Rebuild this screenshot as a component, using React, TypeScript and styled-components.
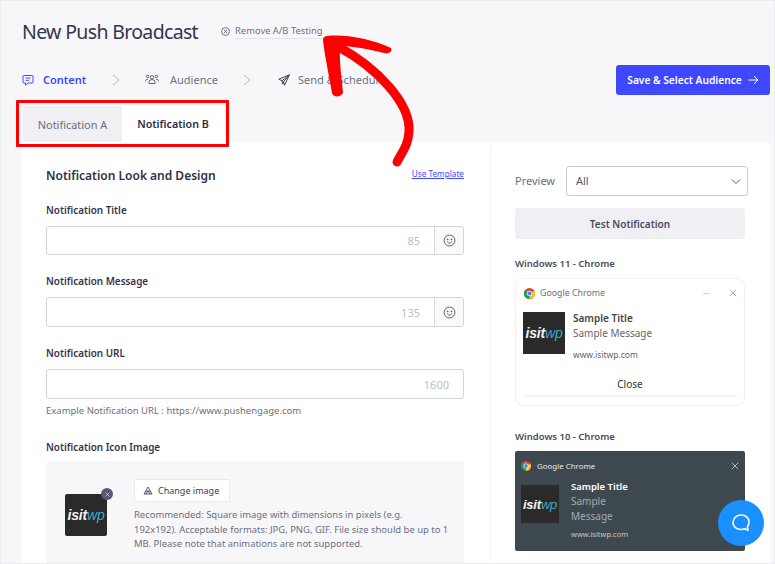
import React from "react";
import styled, { createGlobalStyle } from "styled-components";

const Global = createGlobalStyle`
  html, body { margin: 0; padding: 0; background: #f7f7fa; }
  * { box-sizing: border-box; }
  body { font-family: "Noto Sans", "Open Sans", sans-serif; color: #34344a; }
`;

const Page = styled.div`
  position: relative;
  width: 775px;
  height: 564px;
  overflow: hidden;
  background: #f7f7fa;
  border: 1px solid #ededf1;
  padding: 0 4px 0 21px;
`;
const Header = styled.header`
  display: flex;
  align-items: center;
  height: 60px;
`;
const Title = styled.h1`
  margin: 0;
  font-size: 19.5px;
  font-weight: 400;
  color: #33354f;
  letter-spacing: -0.66px;
`;
const RemoveLink = styled.a`
  display: flex;
  align-items: center;
  gap: 5px;
  margin-left: 23px;
  margin-top: 1px;
  font-size: 9.4px;
  color: #6f7081;
  span { border-bottom: 1px solid #e3e3ea; line-height: 14px; }
`;
const StepBar = styled.div`
  display: flex;
  align-items: center;
  justify-content: space-between;
  height: 37px;
`;
const Steps = styled.nav`
  display: flex;
  align-items: center;
`;
const Step = styled.div<{ $active?: boolean; $w: number }>`
  display: flex;
  align-items: center;
  width: ${(p) => p.$w}px;
  font-size: 11px;
  font-weight: ${(p) => (p.$active ? 600 : 400)};
  color: ${(p) => (p.$active ? "#3f48ff" : "#6f7081")};
`;
const StepIcon = styled.span<{ $w: number }>`
  display: flex;
  width: ${(p) => p.$w}px;
`;
const SaveButton = styled.button`
  display: flex;
  align-items: center;
  justify-content: center;
  gap: 6px;
  width: 154px;
  height: 30px;
  border: 0;
  border-radius: 3px;
  background: #3f48ff;
  color: #fff;
  font: 600 10.2px "Noto Sans", sans-serif;
`;
const Tabs = styled.div`
  display: flex;
  margin: 8px 0 0 1px;
  height: 36px;
`;
const Tab = styled.div<{ $active?: boolean; $w: number }>`
  display: flex;
  align-items: center;
  justify-content: center;
  width: ${(p) => p.$w}px;
  font-size: ${(p) => (p.$active ? 10.7 : 10.9)}px;
  font-weight: ${(p) => (p.$active ? 600 : 400)};
  color: ${(p) => (p.$active ? "#2d2d42" : "#6a6b7c")};
  background: ${(p) => (p.$active ? "#fff" : "#f0f0f4")};
`;
const Panels = styled.div`
  display: flex;
  gap: 1px;
  height: 422px;
  background: #f7f7fa;
`;
const MainPanel = styled.section`
  width: 468px;
  background: #fff;
  padding: 24px 26px 0 24px;
`;
const SidePanel = styled.aside`
  width: 279px;
  background: #fff;
  border-radius: 4px 4px 0 0;
  padding: 24px 22px 0 24px;
`;
const PanelHead = styled.div`
  display: flex;
  justify-content: space-between;
  align-items: center;
  height: 18px;
`;
const PanelTitle = styled.h2`
  margin: 0;
  font-size: 12px;
  font-weight: 600;
  color: #2f3048;
`;
const TemplateLink = styled.a`
  font-size: 8.2px;
  color: #3f48ff;
  text-decoration: underline;
  margin-top: -4px;
`;
const Label = styled.div<{ $top: number }>`
  margin-top: ${(p) => p.$top}px;
  height: 14px;
  line-height: 14px;
  font-size: 9.9px;
  font-weight: 600;
  color: #33344c;
`;
const Field = styled.div<{ $h: number }>`
  display: flex;
  height: ${(p) => p.$h}px;
  margin-top: 9px;
  border: 1px solid #d4d4dc;
  border-radius: 3px;
`;
const FieldBody = styled.div`
  flex: 1;
  display: flex;
  align-items: center;
  justify-content: flex-end;
  padding-right: 14px;
  font-size: 11px;
  color: #bcbcc6;
`;
const EmojiBox = styled.div`
  width: 29px;
  display: flex;
  align-items: center;
  justify-content: center;
  border-left: 1px solid #d4d4dc;
  background: #fafafb;
  border-radius: 0 3px 3px 0;
  color: #55566a;
`;
const Hint = styled.div`
  margin-top: 5px;
  font-size: 9.5px;
  line-height: 14px;
  color: #6d6e7e;
`;
const IconArea = styled.div`
  display: flex;
  margin-top: 7px;
  height: 110px;
  padding: 18px 15px 0 19px;
  background: #f7f7fa;
  border-radius: 4px;
  gap: 27px;
`;
const LogoWrap = styled.div`
  position: relative;
  width: 42px;
  height: 42px;
  margin-top: 15px;
  flex: none;
`;
const Logo = styled.div<{ $size: number; $w: number; $radius?: number }>`
  width: ${(p) => p.$w}px;
  height: ${(p) => p.$w}px;
  flex: none;
  display: flex;
  align-items: center;
  justify-content: center;
  background: #2a2a2a;
  border-radius: ${(p) => p.$radius ?? 0}px;
  font: italic 700 ${(p) => p.$size}px "Liberation Sans", sans-serif;
  color: #f2f2f2;
  letter-spacing: -0.2px;
  b { font-weight: 400; color: #3fa7c6; }
`;
const Badge = styled.span`
  position: absolute;
  top: -6px;
  right: -6px;
  width: 12px;
  height: 12px;
  border-radius: 50%;
  background: #565870;
  display: flex;
  align-items: center;
  justify-content: center;
`;
const ChangeCol = styled.div`
  flex: 1;
`;
const ChangeButton = styled.div`
  display: flex;
  align-items: center;
  gap: 5px;
  width: 96px;
  height: 23px;
  padding-left: 8px;
  background: #fff;
  border: 1px solid #e9e9ee;
  border-radius: 2px;
  font-size: 9px;
  color: #3b3c52;
`;
const Recommend = styled.p`
  margin: 6px 0 0;
  font-size: 9.45px;
  line-height: 14.7px;
  color: #6d6e7e;
  white-space: nowrap;
`;
const PreviewRow = styled.div`
  display: flex;
  align-items: center;
  height: 30px;
`;
const PreviewLabel = styled.span`
  width: 51px;
  font-size: 11px;
  line-height: 14px;
  color: #6d6e7e;
`;
const Select = styled.div`
  width: 182px;
  height: 30px;
  border: 1px solid #c9c9d2;
  border-radius: 3px;
  display: flex;
  align-items: center;
  justify-content: space-between;
  padding: 0 5px 1px 9px;
  font-size: 11px;
  color: #55566a;
`;
const TestButton = styled.div`
  display: flex;
  align-items: center;
  justify-content: center;
  width: 230px;
  height: 31px;
  margin-top: 12px;
  background: #f0f0f4;
  border-radius: 3px;
  font-size: 10px;
  font-weight: 600;
  color: #4a4b60;
`;
const SectionLabel = styled.div<{ $top: number }>`
  margin-top: ${(p) => p.$top}px;
  height: 14px;
  line-height: 14px;
  font-size: 9.5px;
  font-weight: 600;
  color: #4a4b60;
`;
const Win11Card = styled.div`
  width: 230px;
  height: 128px;
  margin-top: 7px;
  border: 1px solid #f0f0f3;
  border-radius: 8px;
  padding: 6px 7px 0 7px;
`;
const CardTop = styled.div`
  display: flex;
  align-items: center;
  height: 16px;
  padding-left: 1px;
  font-size: 8.8px;
  color: #6e6e6e;
  gap: 5px;
`;
const Spacer = styled.span`
  flex: 1;
`;
const Dots = styled.span`
  font-size: 8px;
  color: #999;
  margin-right: 14px;
  letter-spacing: 0.2px;
`;
const CardBody = styled.div`
  display: flex;
  gap: 8px;
  height: 42px;
  margin-top: 11px;
`;
const CardText = styled.div`
  display: flex;
  flex-direction: column;
`;
const Win11Title = styled.div`
  font-size: 10px;
  font-weight: 600;
  line-height: 13px;
  color: #444;
`;
const Win11Msg = styled.div`
  font-size: 10px;
  line-height: 15px;
  margin-top: 1px;
  color: #666;
`;
const Win11Url = styled.div`
  font-size: 8.5px;
  line-height: 12px;
  margin-top: 8px;
  color: #666;
`;
const CloseBtn = styled.div`
  display: flex;
  align-items: center;
  justify-content: center;
  height: 24px;
  margin-top: 19px;
  border-bottom: 2px solid #f3f3f3;
  border-radius: 3px;
  box-shadow: 0 0 1px #f3f3f3;
  font-size: 10px;
  color: #333;
`;
const Win10Card = styled.div`
  width: 230px;
  height: 100px;
  margin-top: 7px;
  background: #3e484f;
  border-radius: 2px;
  padding: 7px 6px 0 6px;
`;
const Win10Top = styled.div`
  display: flex;
  align-items: center;
  gap: 6px;
  height: 16px;
  font-size: 7.9px;
  color: #e8eaeb;
`;
const Win10Body = styled.div`
  display: flex;
  gap: 12px;
  margin-top: 11px;
`;
const Win10Title = styled.div`
  font-size: 9.5px;
  font-weight: 600;
  line-height: 13px;
  margin-top: -5px;
  color: #fff;
`;
const Win10Msg = styled.div`
  font-size: 10px;
  line-height: 14.5px;
  margin-top: 1px;
  color: #a4abb0;
`;
const Win10Url = styled.div`
  font-size: 7.5px;
  line-height: 11px;
  margin-top: 6px;
  color: #c3c7ca;
`;
const ChatButton = styled.div`
  position: absolute;
  left: 717px;
  top: 499px;
  width: 46px;
  height: 46px;
  border-radius: 50%;
  background: #1a90ff;
  display: flex;
  align-items: center;
  justify-content: center;
`;
const RedBox = styled.div`
  position: absolute;
  left: 15px;
  top: 99px;
  width: 213px;
  height: 47px;
  border: 3px solid #f00;
  border-radius: 1px;
`;
const Arrow = styled.svg`
  position: absolute;
  left: -1px;
  top: -1px;
  pointer-events: none;
`;

const Chrome = ({ size = 12 }: { size?: number }) => (
  <svg width={size} height={size} viewBox="0 0 24 24" style={{ flex: "none" }}>
    <circle cx="12" cy="12" r="12" fill="#db4437" />
    <path d="M12 12 1.6 6 A12 12 0 0 0 12 24Z" fill="#0f9d58" />
    <path d="M12 12 12 24 A12 12 0 0 0 22.4 6 Z" fill="#fbc02d" />
    <circle cx="12" cy="12" r="6" fill="#fff" />
    <circle cx="12" cy="12" r="4.6" fill="#4285f4" />
  </svg>
);
const IsitLogo = ({ size, w, radius }: { size: number; w: number; radius?: number }) => (
  <Logo $size={size} $w={w} $radius={radius}>
    isit<b>wp</b>
  </Logo>
);
const Smile = () => (
  <svg width="13" height="13" viewBox="0 0 24 24" fill="none" stroke="currentColor" strokeWidth="1.8">
    <circle cx="12" cy="12" r="10" />
    <circle cx="8.5" cy="10" r="0.9" fill="currentColor" />
    <circle cx="15.5" cy="10" r="0.9" fill="currentColor" />
    <path d="M8 14.5c1 1.6 2.4 2.3 4 2.3s3-.7 4-2.3" strokeLinecap="round" />
  </svg>
);
const X = ({ size, color }: { size: number; color: string }) => (
  <svg width={size} height={size} viewBox="0 0 10 10" stroke={color} strokeWidth="1.1" fill="none">
    <path d="M1 1l8 8M9 1l-8 8" />
  </svg>
);
const Chevron = () => (
  <svg width="8" height="12" viewBox="0 0 8 12" fill="none" stroke="#b4b4be" strokeWidth="1">
    <path d="M1 1l6 5-6 5" />
  </svg>
);

export default function App() {
  return (
    <Page>
      <Global />
      <Header>
        <Title>New Push Broadcast</Title>
        <RemoveLink>
          <svg width="9" height="9" viewBox="0 0 10 10" fill="none" stroke="#55566a" strokeWidth="0.9">
            <circle cx="5" cy="5" r="4.4" />
            <path d="M3.4 3.4l3.2 3.2M6.6 3.4l-3.2 3.2" />
          </svg>
          <span>Remove A/B Testing</span>
        </RemoveLink>
      </Header>
      <StepBar>
        <Steps>
          <Step $active $w={90}>
            <StepIcon $w={21}>
              <svg width="12" height="12" viewBox="0 0 12 12" fill="none" stroke="#3f48ff" strokeWidth="1">
                <path d="M1.5 1.5h9a.5.5 0 0 1 .5.5v6.5a.5.5 0 0 1-.5.5H6L3.5 11V9h-2a.5.5 0 0 1-.5-.5V2a.5.5 0 0 1 .5-.5Z" />
                <path d="M3.5 4h5M3.5 6.3h3.5" />
              </svg>
            </StepIcon>
            Content
          </Step>
          <Step $w={33}><Chevron /></Step>
          <Step $w={98}>
            <StepIcon $w={25}>
              <svg width="14" height="11" viewBox="0 0 14 11" fill="none" stroke="#55566a" strokeWidth="0.9">
                <circle cx="7" cy="3.2" r="1.7" />
                <circle cx="2.6" cy="2.4" r="1.2" />
                <circle cx="11.4" cy="2.4" r="1.2" />
                <path d="M4 9.5V8a3 2.4 0 0 1 6 0v1.5ZM.6 7.5V6.6a2 1.8 0 0 1 2.4-1.4M13.4 7.5V6.6a2 1.8 0 0 0-2.4-1.4" />
              </svg>
            </StepIcon>
            Audience
          </Step>
          <Step $w={35}><Chevron /></Step>
          <Step $w={120}>
            <StepIcon $w={20}>
              <svg width="12" height="12" viewBox="0 0 12 12" fill="none" stroke="#44455a" strokeWidth="1">
                <path d="M11.3.8.8 5.2l3.2 1.6L11.3.8 5.4 8l1.2 3.3L11.3.8ZM4 6.8l.6 3.4L6 8.6" strokeLinejoin="round" />
              </svg>
            </StepIcon>
            Send &amp; Schedule
          </Step>
        </Steps>
        <SaveButton>
          Save &amp; Select Audience
          <svg width="11" height="10" viewBox="0 0 11 10" fill="none" stroke="#fff" strokeWidth="1">
            <path d="M.5 5h9.5M6 1l4 4-4 4" />
          </svg>
        </SaveButton>
      </StepBar>
      <Tabs>
        <Tab $w={99}>Notification A</Tab>
        <Tab $active $w={102}>Notification B</Tab>
      </Tabs>
      <Panels>
        <MainPanel>
          <PanelHead>
            <PanelTitle>Notification Look and Design</PanelTitle>
            <TemplateLink>Use Template</TemplateLink>
          </PanelHead>
          <Label $top={19}>Notification Title</Label>
          <Field $h={29}>
            <FieldBody>85</FieldBody>
            <EmojiBox><Smile /></EmojiBox>
          </Field>
          <Label $top={19}>Notification Message</Label>
          <Field $h={30}>
            <FieldBody>135</FieldBody>
            <EmojiBox><Smile /></EmojiBox>
          </Field>
          <Label $top={19}>Notification URL</Label>
          <Field $h={30}>
            <FieldBody>1600</FieldBody>
          </Field>
          <Hint>Example Notification URL : https://www.pushengage.com</Hint>
          <Label $top={22}>Notification Icon Image</Label>
          <IconArea>
            <LogoWrap>
              <IsitLogo size={14} w={42} radius={2} />
              <Badge><X size={5} color="#fff" /></Badge>
            </LogoWrap>
            <ChangeCol>
              <ChangeButton>
                <svg width="10" height="9" viewBox="0 0 10 9" fill="none" stroke="#44455a" strokeWidth="0.9">
                  <path d="M5 1 1 8h8L5 1ZM3 5.2h4M2.8 8 5 4.8 7.2 8" />
                </svg>
                Change image
              </ChangeButton>
              <Recommend>
                Recommended: Square image with dimensions in pixels (e.g.<br />
                192x192). Acceptable formats: JPG, PNG, GIF. File size should be up to 1<br />
                MB. Please note that animations are not supported.
              </Recommend>
            </ChangeCol>
          </IconArea>
        </MainPanel>
        <SidePanel>
          <PreviewRow>
            <PreviewLabel>Preview</PreviewLabel>
            <Select>
              All
              <svg width="12" height="12" viewBox="0 0 12 12" fill="none" stroke="#55566a" strokeWidth="1">
                <path d="M2 4.5 6 8.5l4-4" />
              </svg>
            </Select>
          </PreviewRow>
          <TestButton>Test Notification</TestButton>
          <SectionLabel $top={18}>Windows 11 - Chrome</SectionLabel>
          <Win11Card>
            <CardTop>
              <Chrome size={11} />
              Google Chrome
              <Spacer />
              <Dots>···</Dots>
              <X size={8} color="#aaa" />
            </CardTop>
            <CardBody>
              <IsitLogo size={14} w={42} />
              <CardText>
                <Win11Title>Sample Title</Win11Title>
                <Win11Msg>Sample Message</Win11Msg>
                <Win11Url>www.isitwp.com</Win11Url>
              </CardText>
            </CardBody>
            <CloseBtn>Close</CloseBtn>
          </Win11Card>
          <SectionLabel $top={24}>Windows 10 - Chrome</SectionLabel>
          <Win10Card>
            <Win10Top>
              <Chrome size={10} />
              Google Chrome
              <Spacer />
              <X size={8} color="#c8ccce" />
            </Win10Top>
            <Win10Body>
              <IsitLogo size={13} w={38} />
              <CardText>
                <Win10Title>Sample Title</Win10Title>
                <Win10Msg>Sample<br />Message</Win10Msg>
                <Win10Url>www.isitwp.com</Win10Url>
              </CardText>
            </Win10Body>
          </Win10Card>
        </SidePanel>
      </Panels>
      <ChatButton>
        <svg width="20" height="20" viewBox="0 0 20 20" fill="none" stroke="#fff" strokeWidth="1.6">
          <path d="M10 2c4.6 0 8 2.9 8 7 0 2-.7 3.6-1.6 4.8l.6 3.4-3.4-1.4c-1.1.5-2.3.7-3.6.7-4.6 0-8-3-8-7s3.4-7.5 8-7.5Z" strokeLinejoin="round" />
        </svg>
      </ChatButton>
      <RedBox />
      <Arrow width="775" height="564" viewBox="0 0 775 564">
        <path
          d="M397 162 C402 152 408 146 409 132 C411 104 378 68 337 46"
          fill="none"
          stroke="#f00"
          strokeWidth="9"
          strokeLinecap="round"
        />
        <path
          d="M327 36 C345 34 372 39 391 48 C393 52 388 54 384 53 C368 49 352 46 340 46 C339 62 342 80 343 93 C340 98 333 97 332 93 C329 75 324 52 323 40 C323 37 325 36 327 36 Z"
          fill="#f00"
        />
      </Arrow>
    </Page>
  );
}
